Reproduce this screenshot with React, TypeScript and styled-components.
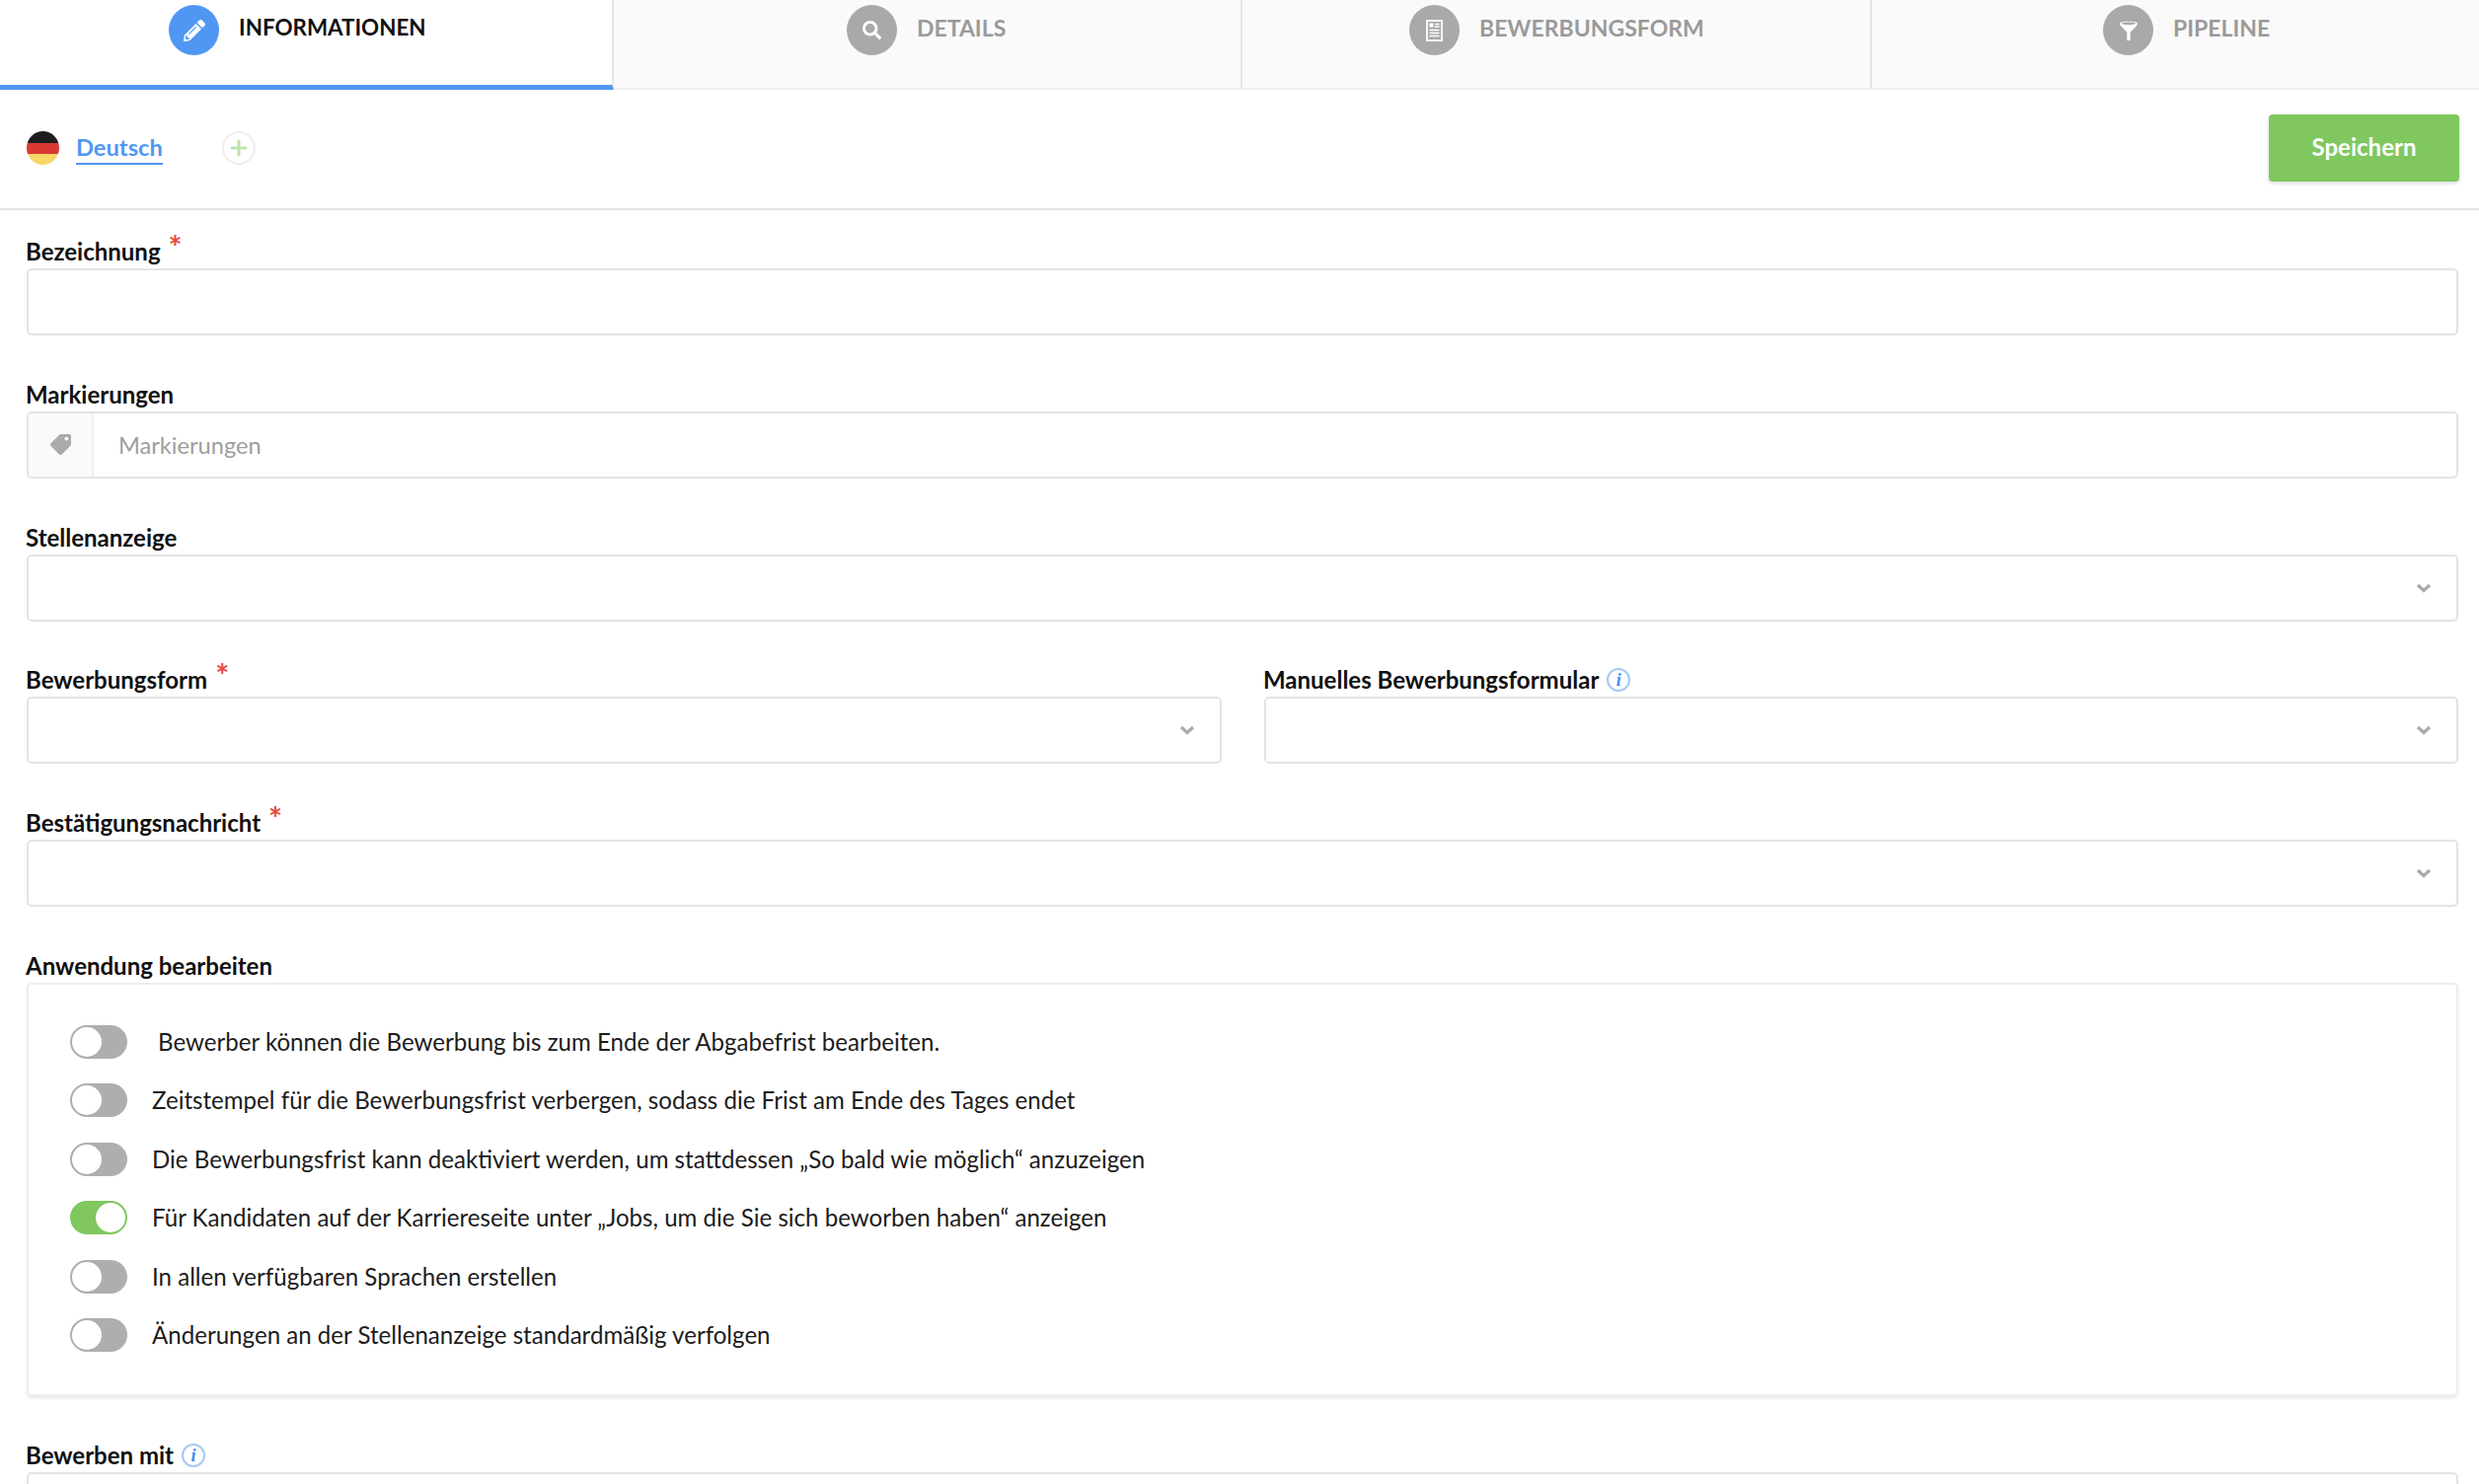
import React from "react";
import styled, { createGlobalStyle } from "styled-components";
import { FaPencilAlt, FaSearch, FaTag } from "react-icons/fa";

const Global = createGlobalStyle`
  html, body { margin: 0; padding: 0; background: #fff; height: 1504px; overflow: hidden; }
  body { font-family: "Lato", "Liberation Sans", sans-serif; color: #111; }
  * { box-sizing: border-box; }
`;

const Page = styled.div`
  width: 2512px;
  height: 1504px;
  overflow: hidden;
`;

const TabBar = styled.nav`
  display: flex;
  height: 91px;
`;

const Tab = styled.div<{ $width: number; $pad: number; $active?: boolean; $last?: boolean }>`
  width: ${(p) => p.$width}px;
  height: 91px;
  flex: none;
  display: flex;
  align-items: flex-start;
  padding: 5px 0 0 ${(p) => p.$pad}px;
  gap: 20px;
  background: ${(p) => (p.$active ? "#fff" : "#fafafa")};
  border-bottom: ${(p) => (p.$active ? "5px solid #5097f3" : "2px solid #eeeeee")};
  border-right: ${(p) => (p.$last ? "none" : "2px solid #e4e4e4")};
`;

const TabCircle = styled.span<{ $active?: boolean }>`
  width: 51px;
  height: 51px;
  flex: none;
  border-radius: 50%;
  display: flex;
  align-items: center;
  justify-content: center;
  color: #fff;
  background: ${(p) => (p.$active ? "#5097f3" : "#a9a9a9")};
`;

const TabLabel = styled.span<{ $active?: boolean }>`
  font-size: ${(p) => (p.$active ? "22.4px" : "23px")};
  line-height: 28px;
  margin-top: 9px;
  font-weight: 700;
  color: ${(p) => (p.$active ? "#111" : "#9a9a9a")};
  white-space: nowrap;
`;

const LangBar = styled.div`
  height: 122px;
  display: flex;
  align-items: center;
  padding: 0 20px 2px 27px;
  border-bottom: 2px solid #e4e4e4;
`;

const Flag = styled.svg`
  width: 33px;
  height: 34px;
  flex: none;
`;

const LangLink = styled.a`
  margin-left: 17px;
  font-size: 23.7px;
  line-height: 30px;
  font-weight: 700;
  color: #5097f3;
  border-bottom: 2px solid #5097f3;
  padding-bottom: 1px;
`;

const AddCircle = styled.span`
  margin-left: 60px;
  width: 34px;
  height: 34px;
  border-radius: 50%;
  border: 2px solid #eeeeee;
  display: flex;
  align-items: center;
  justify-content: center;
`;

const SaveButton = styled.button`
  margin-left: auto;
  width: 193px;
  height: 68px;
  border: 0;
  border-radius: 4px;
  background: #7fc75e;
  color: #fff;
  font: 700 24px/28px "Lato", sans-serif;
  padding: 0 0 3px;
  box-shadow: 0 2px 4px rgba(0, 0, 0, 0.14);
`;

const Form = styled.main`
  padding: 27px 21px 0 27px;
`;

const Field = styled.section`
  margin-bottom: 44.8px;
`;

const Row = styled.div`
  display: grid;
  grid-template-columns: 1211px 1210px;
  column-gap: 43px;
`;

const LabelRow = styled.div`
  height: 32px;
  display: flex;
  align-items: center;
  margin-left: -1px;
  padding-bottom: 2px;
`;

const Label = styled.label`
  font-size: 24px;
  line-height: 30px;
  font-weight: 700;
  color: #111;
  white-space: nowrap;
`;

const Star = styled.span`
  color: #e5483f;
  font-size: 33px;
  line-height: 20px;
  font-weight: 700;
  margin: -10px 0 0 8px;
`;

const Info = styled.span`
  margin-left: 8px;
  width: 24px;
  height: 24px;
  border-radius: 50%;
  border: 2px solid #a5c8f7;
  color: #3f8bf0;
  font: italic 700 18px/20px "Liberation Serif", serif;
  text-align: center;
  flex: none;
`;

const Box = styled.div`
  height: 68px;
  border: 2px solid #e4e4e4;
  border-radius: 5px;
  background: #fff;
  display: flex;
  align-items: center;
`;

const Addon = styled.span`
  width: 66px;
  height: 100%;
  flex: none;
  background: #fafafa;
  border-right: 2px solid #eeeeee;
  display: flex;
  align-items: center;
  justify-content: center;
  color: #aaaaaa;
  border-radius: 3px 0 0 3px;
`;

const Placeholder = styled.span`
  margin-left: 25px;
  font-size: 23.6px;
  color: #9e9e9e;
`;

const Chevron = styled.svg`
  width: 16px;
  height: 10px;
  margin-left: auto;
  margin-right: 25px;
  flex: none;
`;

const Panel = styled.div`
  height: 419px;
  border: 2px solid #eeeeee;
  border-radius: 5px;
  box-shadow: 0 2px 3px rgba(0, 0, 0, 0.1);
  padding: 41px 0 0 42px;
  display: flex;
  flex-direction: column;
  gap: 25.5px;
`;

const ToggleRow = styled.div`
  display: flex;
  align-items: center;
  height: 34px;
  gap: 25px;
`;

const Toggle = styled.span<{ $on?: boolean }>`
  position: relative;
  width: 58px;
  height: 34px;
  flex: none;
  border-radius: 17px;
  background: ${(p) => (p.$on ? "#7fc75e" : "#aeaeae")};
`;

const Knob = styled.span<{ $on?: boolean }>`
  position: absolute;
  top: 2px;
  left: ${(p) => (p.$on ? "26px" : "2px")};
  width: 30px;
  height: 30px;
  border-radius: 50%;
  background: #fff;
`;

const ToggleText = styled.span<{ $indent?: boolean }>`
  font-size: 24.1px;
  line-height: 30px;
  color: #1c1c1c;
  white-space: nowrap;
  margin-left: ${(p) => (p.$indent ? "6px" : "0")};
`;

const FlagIcon = () => (
  <Flag viewBox="0 0 33 34">
    <defs>
      <clipPath id="flag-clip">
        <ellipse cx="16.5" cy="17" rx="16.5" ry="17" />
      </clipPath>
    </defs>
    <g clipPath="url(#flag-clip)">
      <rect width="33" height="12" fill="#1d1d1d" />
      <rect y="12" width="33" height="11" fill="#d83a33" />
      <rect y="23" width="33" height="11" fill="#f6d768" />
    </g>
  </Flag>
);

const PlusIcon = () => (
  <svg width="18" height="18" viewBox="0 0 18 18">
    <path d="M9 2v14M2 9h14" stroke="#bfe3ae" strokeWidth="3" strokeLinecap="round" />
  </svg>
);

const FormIcon = () => (
  <svg width="17" height="22" viewBox="0 0 17 22">
    <rect x="1" y="1" width="15" height="20" fill="none" stroke="#fff" strokeWidth="1.8" />
    <path d="M3.500 3.500h4v4h-4z" fill="#fff" />
    <path d="M9 4.500h4.500M9 7h4.500M3.500 10.500h10M3.500 13.500h10M3.500 16.500h10" stroke="#fff" strokeWidth="1.500" />
  </svg>
);

const FunnelIcon = () => (
  <svg width="20" height="22" viewBox="0 0 20 22">
    <path
      d="M1 3.500C1 1 19 1 19 3.500c0 1.600-.8 2.500-1.800 3.500L11.700 12.500V21H8.300v-8.500L2.800 7C1.800 6 1 5.100 1 3.500z"
      fill="#fff"
    />
    <ellipse cx="10" cy="3.800" rx="7" ry="1.400" fill="#a9a9a9" />
  </svg>
);

const ChevronIcon = () => (
  <Chevron viewBox="0 0 16 10">
    <path d="M2 2l6 5.500L14 2" fill="none" stroke="#aaaaaa" strokeWidth="3.200" />
  </Chevron>
);

const tabs = [
  { label: "INFORMATIONEN", width: 622, pad: 171, icon: <FaPencilAlt size={22} />, active: true },
  { label: "DETAILS", width: 637, pad: 236, icon: <FaSearch size={19} /> },
  { label: "BEWERBUNGSFORM", width: 638, pad: 169, icon: <FormIcon /> },
  { label: "PIPELINE", width: 615, pad: 234, icon: <FunnelIcon />, last: true },
];

const toggles = [
  { text: "Bewerber können die Bewerbung bis zum Ende der Abgabefrist bearbeiten.", indent: true },
  { text: "Zeitstempel für die Bewerbungsfrist verbergen, sodass die Frist am Ende des Tages endet" },
  { text: "Die Bewerbungsfrist kann deaktiviert werden, um stattdessen „So bald wie möglich“ anzuzeigen" },
  { text: "Für Kandidaten auf der Karriereseite unter „Jobs, um die Sie sich beworben haben“ anzeigen", on: true },
  { text: "In allen verfügbaren Sprachen erstellen" },
  { text: "Änderungen an der Stellenanzeige standardmäßig verfolgen" },
];

const FieldLabel = ({ text, star, info }: { text: string; star?: boolean; info?: boolean }) => (
  <LabelRow>
    <Label>{text}</Label>
    {star && <Star>*</Star>}
    {info && <Info>i</Info>}
  </LabelRow>
);

export default function App() {
  return (
    <Page>
      <Global />
      <TabBar>
        {tabs.map((t) => (
          <Tab key={t.label} $width={t.width} $pad={t.pad} $active={t.active} $last={t.last}>
            <TabCircle $active={t.active}>{t.icon}</TabCircle>
            <TabLabel $active={t.active}>{t.label}</TabLabel>
          </Tab>
        ))}
      </TabBar>
      <LangBar>
        <FlagIcon />
        <LangLink>Deutsch</LangLink>
        <AddCircle>
          <PlusIcon />
        </AddCircle>
        <SaveButton>Speichern</SaveButton>
      </LangBar>
      <Form>
        <Field>
          <FieldLabel text="Bezeichnung" star />
          <Box />
        </Field>
        <Field>
          <FieldLabel text="Markierungen" />
          <Box>
            <Addon>
              <FaTag size={21} style={{ transform: "scaleX(-1)" }} />
            </Addon>
            <Placeholder>Markierungen</Placeholder>
          </Box>
        </Field>
        <Field>
          <FieldLabel text="Stellenanzeige" />
          <Box>
            <ChevronIcon />
          </Box>
        </Field>
        <Row>
          <Field>
            <FieldLabel text="Bewerbungsform" star />
            <Box>
              <ChevronIcon />
            </Box>
          </Field>
          <Field>
            <FieldLabel text="Manuelles Bewerbungsformular" info />
            <Box>
              <ChevronIcon />
            </Box>
          </Field>
        </Row>
        <Field>
          <FieldLabel text="Bestätigungsnachricht" star />
          <Box>
            <ChevronIcon />
          </Box>
        </Field>
        <Field>
          <FieldLabel text="Anwendung bearbeiten" />
          <Panel>
            {toggles.map((t) => (
              <ToggleRow key={t.text}>
                <Toggle $on={t.on}>
                  <Knob $on={t.on} />
                </Toggle>
                <ToggleText $indent={t.indent}>{t.text}</ToggleText>
              </ToggleRow>
            ))}
          </Panel>
        </Field>
        <Field>
          <FieldLabel text="Bewerben mit" info />
          <Box />
        </Field>
      </Form>
    </Page>
  );
}
